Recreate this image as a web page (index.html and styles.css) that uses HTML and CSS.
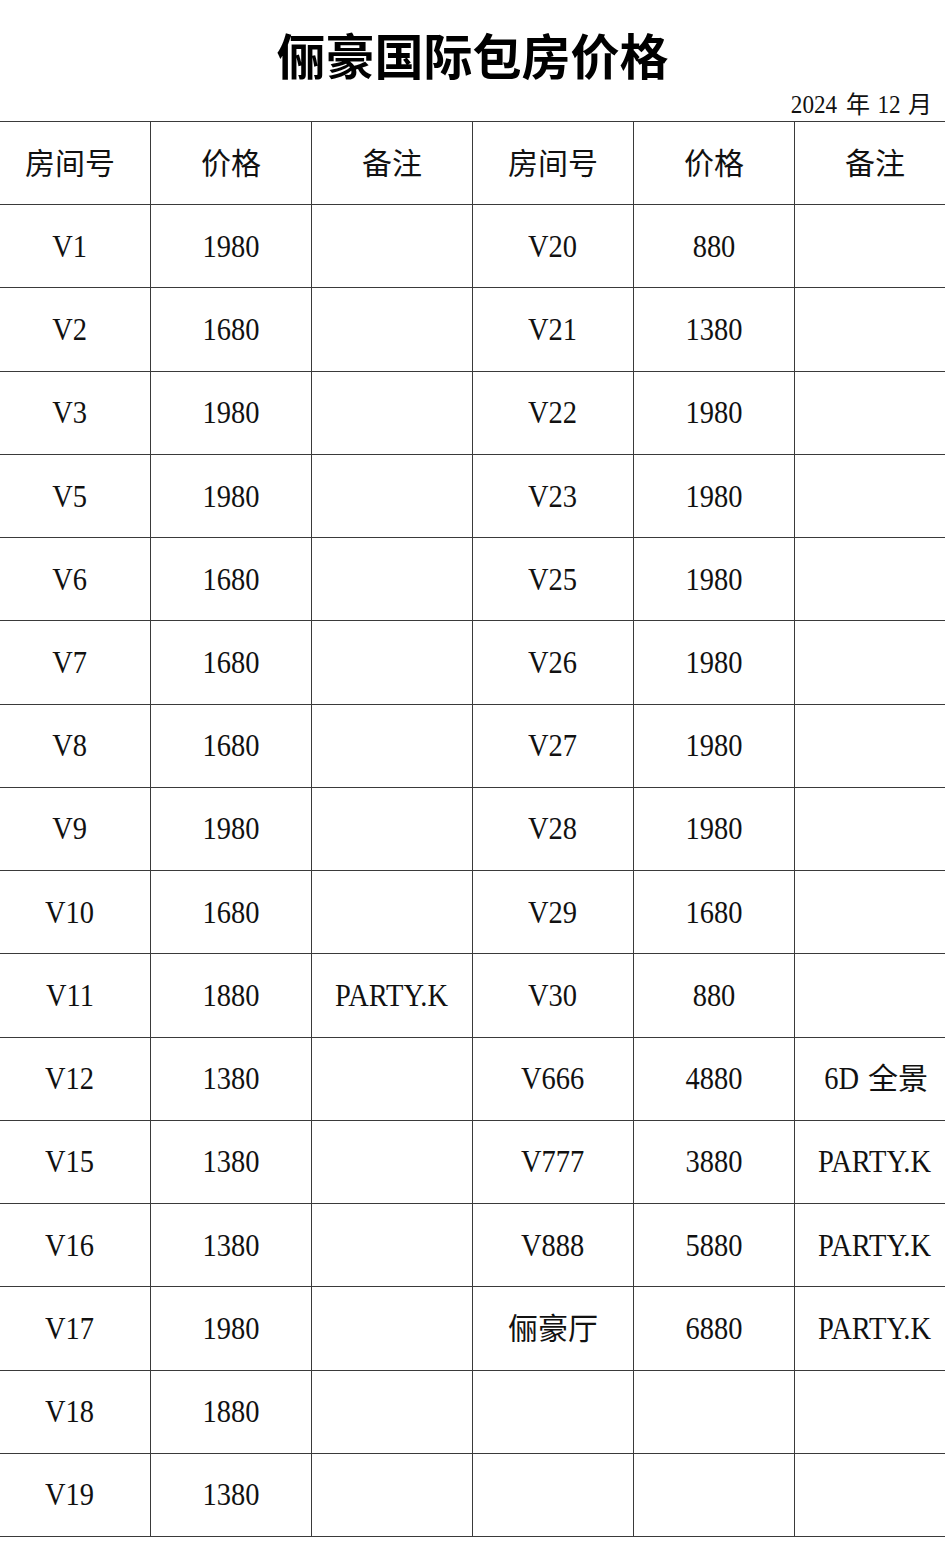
FILE: index.html
```html
<!DOCTYPE html>
<html lang="zh">
<head>
<meta charset="utf-8">
<title>俪豪国际包房价格</title>
<link rel="stylesheet" href="styles.css">
</head>
<body>
<div class="page">
  <h1 class="title">俪豪国际包房价格</h1>
  <div class="date"><span class="n">2024</span> 年 <span class="n">12</span> 月</div>
  <table class="prices">
    <colgroup>
      <col class="c"><col class="c"><col class="c"><col class="c"><col class="c"><col class="c">
    </colgroup>
    <thead>
      <tr><th>房间号</th><th>价格</th><th>备注</th><th>房间号</th><th>价格</th><th>备注</th></tr>
    </thead>
    <tbody>
      <tr><td><span class="n">V1</span></td><td><span class="n">1980</span></td><td></td><td><span class="n">V20</span></td><td><span class="n">880</span></td><td></td></tr>
      <tr><td><span class="n">V2</span></td><td><span class="n">1680</span></td><td></td><td><span class="n">V21</span></td><td><span class="n">1380</span></td><td></td></tr>
      <tr><td><span class="n">V3</span></td><td><span class="n">1980</span></td><td></td><td><span class="n">V22</span></td><td><span class="n">1980</span></td><td></td></tr>
      <tr><td><span class="n">V5</span></td><td><span class="n">1980</span></td><td></td><td><span class="n">V23</span></td><td><span class="n">1980</span></td><td></td></tr>
      <tr><td><span class="n">V6</span></td><td><span class="n">1680</span></td><td></td><td><span class="n">V25</span></td><td><span class="n">1980</span></td><td></td></tr>
      <tr><td><span class="n">V7</span></td><td><span class="n">1680</span></td><td></td><td><span class="n">V26</span></td><td><span class="n">1980</span></td><td></td></tr>
      <tr><td><span class="n">V8</span></td><td><span class="n">1680</span></td><td></td><td><span class="n">V27</span></td><td><span class="n">1980</span></td><td></td></tr>
      <tr><td><span class="n">V9</span></td><td><span class="n">1980</span></td><td></td><td><span class="n">V28</span></td><td><span class="n">1980</span></td><td></td></tr>
      <tr><td><span class="n">V10</span></td><td><span class="n">1680</span></td><td></td><td><span class="n">V29</span></td><td><span class="n">1680</span></td><td></td></tr>
      <tr><td><span class="n">V11</span></td><td><span class="n">1880</span></td><td><span class="n">PARTY.K</span></td><td><span class="n">V30</span></td><td><span class="n">880</span></td><td></td></tr>
      <tr><td><span class="n">V12</span></td><td><span class="n">1380</span></td><td></td><td><span class="n">V666</span></td><td><span class="n">4880</span></td><td><span class="n">6D</span> 全景</td></tr>
      <tr><td><span class="n">V15</span></td><td><span class="n">1380</span></td><td></td><td><span class="n">V777</span></td><td><span class="n">3880</span></td><td><span class="n">PARTY.K</span></td></tr>
      <tr><td><span class="n">V16</span></td><td><span class="n">1380</span></td><td></td><td><span class="n">V888</span></td><td><span class="n">5880</span></td><td><span class="n">PARTY.K</span></td></tr>
      <tr><td><span class="n">V17</span></td><td><span class="n">1980</span></td><td></td><td>俪豪厅</td><td><span class="n">6880</span></td><td><span class="n">PARTY.K</span></td></tr>
      <tr><td><span class="n">V18</span></td><td><span class="n">1880</span></td><td></td><td></td><td></td><td></td></tr>
      <tr><td><span class="n">V19</span></td><td><span class="n">1380</span></td><td></td><td></td><td></td><td></td></tr>
    </tbody>
  </table>
</div>
</body>
</html>
```

FILE: styles.css
```css
html, body {
  margin: 0;
  padding: 0;
  background: #ffffff;
  color: #111111;
}

body {
  font-family: "Noto Sans CJK SC", "Noto Sans", sans-serif;
  overflow-x: hidden;
}

.page {
  width: 945px;
  overflow: hidden;
}

.title {
  margin: 0;
  padding-top: 26px;
  height: 56px;
  line-height: 56px;
  font-size: 49px;
  font-weight: 700;
  text-align: center;
  color: #000000;
}

.date {
  height: 39px;
  line-height: 45px;
  padding-right: 13px;
  text-align: right;
  font-size: 24px;
  font-family: "Liberation Serif", "Noto Sans CJK SC", serif;
  white-space: nowrap;
}

.date .n {
  font-size: 26px;
}

.n {
  display: inline-block;
  font-family: "Liberation Serif", serif;
  transform: scaleX(0.89);
}

.prices {
  width: 966px;
  border-collapse: collapse;
  table-layout: fixed;
  margin-left: -11px;
}

.c { width: 161px; }

.prices th,
.prices td {
  border: 1.5px solid #3a3a3a;
  height: 77.24px;
  padding: 0 0 5px 0;
  text-align: center;
  vertical-align: middle;
  white-space: nowrap;
}

.prices th {
  font-size: 30px;
  font-weight: 400;
}

.prices td {
  font-size: 30px;
}

.prices td .n {
  font-size: 32px;
}
```
